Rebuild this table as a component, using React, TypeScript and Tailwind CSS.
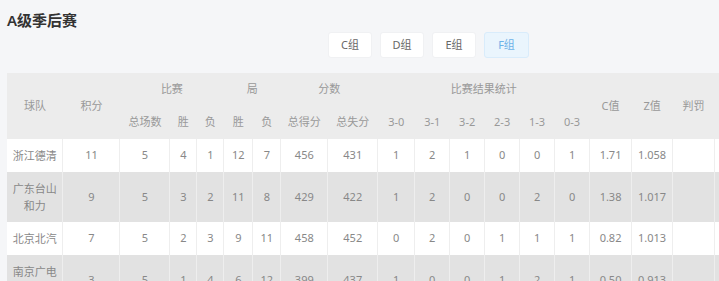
import { useState } from "react";

const groups = ["C组", "D组", "E组", "F组"];

const widths = [56, 57, 50, 27, 27, 29, 28, 47, 50, 37, 35, 35, 35, 35, 35, 42, 41, 42, 135];

interface Row {
  team: string;
  cells: string[];
}

const rows: Row[] = [
  { team: "浙江德清", cells: ["11", "5", "4", "1", "12", "7", "456", "431", "1", "2", "1", "0", "0", "1", "1.71", "1.058", "", ""] },
  { team: "广东台山和力", cells: ["9", "5", "3", "2", "11", "8", "429", "422", "1", "2", "0", "0", "2", "0", "1.38", "1.017", "", ""] },
  { team: "北京北汽", cells: ["7", "5", "2", "3", "9", "11", "458", "452", "0", "2", "0", "1", "1", "1", "0.82", "1.013", "", ""] },
  { team: "南京广电体育", cells: ["3", "5", "1", "4", "6", "12", "399", "437", "1", "0", "0", "1", "2", "1", "0.50", "0.913", "", ""] },
];

export default function App() {
  const [active, setActive] = useState("F组");

  return (
    <div
      className="w-full min-h-screen overflow-hidden bg-[#f5f6f8] text-[#888]"
      style={{ fontFamily: '"Noto Sans", "Noto Sans CJK SC", sans-serif' }}
    >
      <div className="w-[850px] pt-[10px] pl-[7px]">
        <h1 className="text-[15px] leading-[20px] font-semibold text-[#333]">A级季后赛</h1>

        {/* group switch */}
        <div className="mt-[2px] flex justify-center gap-[8px]">
          {groups.map((g) => (
            <button
              key={g}
              onClick={() => setActive(g)}
              className={
                active === g
                  ? "w-[45px] h-[26px] rounded-[3px] border border-[#d9ecfb] bg-[#eaf5fd] text-[11px] text-[#6cb2e8]"
                  : "w-[44px] h-[26px] rounded-[3px] border border-[#f0f1f3] bg-white text-[11px] text-[#666]"
              }
            >
              {g}
            </button>
          ))}
        </div>

        {/* standings */}
        <table className="mt-[15px] table-fixed border-collapse text-[11px] text-center">
          <colgroup>
            {widths.map((w, i) => (
              <col key={i} style={{ width: w }} />
            ))}
          </colgroup>
          <thead className="bg-[#ececec] text-[#999]">
            <tr className="h-[33px]">
              <th rowSpan={2} className="font-normal">球队</th>
              <th rowSpan={2} className="font-normal">积分</th>
              <th colSpan={3} className="font-normal">比赛</th>
              <th colSpan={2} className="font-normal">局</th>
              <th colSpan={2} className="font-normal">分数</th>
              <th colSpan={6} className="font-normal">比赛结果统计</th>
              <th rowSpan={2} className="font-normal">C值</th>
              <th rowSpan={2} className="font-normal">Z值</th>
              <th rowSpan={2} className="font-normal">判罚</th>
              <th rowSpan={2} className="font-normal"></th>
            </tr>
            <tr className="h-[33px]">
              {["总场数", "胜", "负", "胜", "负", "总得分", "总失分", "3-0", "3-1", "3-2", "2-3", "1-3", "0-3"].map((h, i) => (
                <th key={i} className="font-normal">{h}</th>
              ))}
            </tr>
          </thead>
          <tbody>
            {rows.map((r, i) => (
              <tr key={r.team} className={i % 2 === 0 ? "h-[33px] bg-white" : "h-[50px] bg-[#e2e2e2]"}>
                <td className="px-[4px] leading-[17px] border-r border-[#eeeeee]">{r.team}</td>
                {r.cells.map((c, j) => (
                  <td key={j} className="border-r border-[#eeeeee]">{c}</td>
                ))}
              </tr>
            ))}
          </tbody>
        </table>
      </div>
    </div>
  );
}
